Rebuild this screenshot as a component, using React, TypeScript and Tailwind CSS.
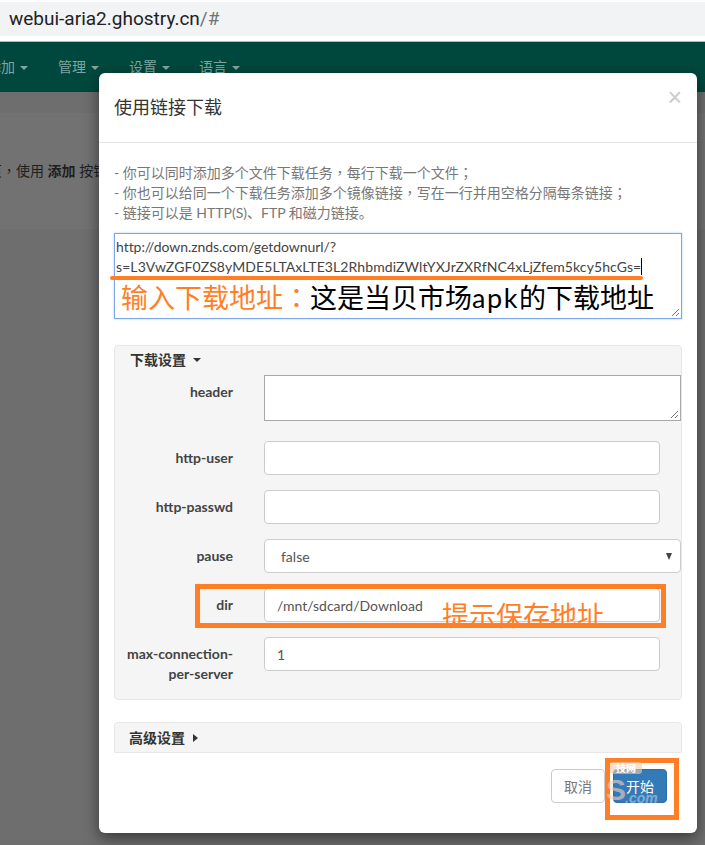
const cjk = "font-['Lato','Noto_Sans_CJK_SC',sans-serif]";

// centred full-width punctuation, like the YaHei glyphs in the picture
const P = ({ c }: { c: string }) => <span className="font-['Noto_Sans_CJK_TC',sans-serif] leading-[0px]">{c}</span>;

const Field = ({ label, value, wide, pad }: { label: string; value?: string; wide?: boolean; pad?: string }) => (
  <div className="flex items-start">
    <label className="w-[118px] shrink-0 pt-[7px] text-right text-[14px] leading-[20px] font-bold text-[#444]">{label}</label>
    <div className={`ml-[31px] flex h-[34px] items-center rounded-[4px] border border-[#ccc] bg-white text-[14px] text-[#555] ${pad ?? 'px-3'} ${wide ? 'w-[417px]' : 'w-[396px]'}`}>
      {value}
    </div>
  </div>
);

const Grip = () => (
  <svg className="absolute right-[1px] bottom-[1px]" width="9" height="9" viewBox="0 0 9 9">
    <path d="M1 8 8 1M5 8 8 5" stroke="#777" strokeWidth="1" fill="none" />
  </svg>
);

export default function App() {
  return (
    <div className={`relative h-[845px] w-[705px] overflow-hidden bg-[#6e6e6e] ${cjk}`}>
      <div className="h-[42px] border-b border-[#b8b8b8] bg-white pt-[2px]">
        <div className="flex h-[34px] items-center bg-[#f1f3f4] pl-[9px] font-['Roboto','Liberation_Sans',sans-serif] text-[19px] text-[#202124]">
          webui-aria2.ghostry.cn<span className="text-[#6f7478]">/#</span>
        </div>
      </div>

      <nav className="flex h-[50px] items-center bg-[#00483d] pb-[2px] text-[14px] text-[#7fa5a0]">
        <span className="ml-[-13px] w-[71px]">添加 <Caret /></span>
        <span className="w-[71px]">管理 <Caret /></span>
        <span className="w-[70px]">设置 <Caret /></span>
        <span>语言 <Caret /></span>
      </nav>

      <div className="mt-[21px] h-[116px] bg-[#727272] pt-[48px] text-[14px] leading-[20px] text-[#1f1f1f]">
        <p className="ml-[-12px] whitespace-nowrap">页<P c="，" />使用 <b>添加</b> 按钮</p>
      </div>

      <div className="absolute top-[73px] left-[99px] h-[760px] w-[598px] overflow-hidden rounded-[6px] bg-white shadow-[0_5px_15px_rgba(0,0,0,0.5)]">
        <header className="flex h-[70px] items-start justify-between border-b border-[#e5e5e5] pr-[15px] pl-[15px]">
          <h4 className="pt-[21px] text-[18px] leading-[26px] text-[#333]">使用链接下载</h4>
          <span className="pt-[11px] font-['Liberation_Sans',sans-serif] text-[25px] leading-[26px] text-[#ccc]">×</span>
        </header>

        <div className="px-[15px]">
          <div className="pt-[20px] text-[14px] leading-[20px] text-[#777]">
            <p>- 你可以同时添加多个文件下载任务<P c="，" />每行下载一个文件<P c="；" /></p>
            <p>- 你也可以给同一个下载任务添加多个镜像链接<P c="，" />写在一行并用空格分隔每条链接<P c="；" /></p>
            <p>- 链接可以是 HTTP(S)、FTP 和磁力链接。</p>
          </div>

          <div className="relative mt-[10px] h-[86px] w-[568px] border border-[#7da7e8] bg-white px-[1px] pt-[3px] text-[14px] leading-[20px] text-[#444] shadow-[0_0_2px_rgba(102,175,233,0.6)]">
            <div className="tracking-[-0.05px]">http://down.znds.com/getdownurl/?</div>
            <div className="whitespace-nowrap tracking-[0.09px]">s=L3VwZGF0ZS8yMDE5LTAxLTE3L2RhbmdiZWltYXJrZXRfNC4xLjZfem5kcy5hcGs=<span className="border-l border-black" /></div>
            <Grip />
          </div>

          <section className="mt-[26px] h-[355px] w-[568px] rounded-[4px] border border-[#e7e7e7] bg-[#f5f5f5]">
            <div className="flex h-[29px] items-center pb-[2px] pl-[15px] text-[14px] font-bold text-[#333]">
              下载设置
              <span className="ml-[7px] h-0 w-0 border-x-[4px] border-t-[4px] border-x-transparent border-t-[#333]" />
            </div>
            <div className="flex items-start">
              <label className="w-[118px] shrink-0 pt-[7px] text-right text-[14px] leading-[20px] font-bold text-[#444]">header</label>
              <div className="relative ml-[31px] h-[46px] w-[417px] border border-[#a9a9a9] bg-white">
                <Grip />
              </div>
            </div>
            <div className="mt-[20px] flex flex-col gap-[15px]">
              <Field label="http-user" />
              <Field label="http-passwd" />
              <div className="relative">
                <Field label="pause" value="false" wide pad="px-4" />
                <span className="absolute top-[14px] right-[9px] h-0 w-0 border-x-[3.5px] border-t-[7px] border-x-transparent border-t-[#444]" />
              </div>
              <Field label="dir" value="/mnt/sdcard/Download" />
              <div className="flex items-start">
                <label className="w-[118px] shrink-0 pt-[7px] text-right text-[14px] leading-[20px] font-bold text-[#444]">max-connection-per-server</label>
                <div className="ml-[31px] flex h-[34px] w-[396px] items-center rounded-[4px] border border-[#ccc] bg-white px-3 text-[14px] text-[#555]">1</div>
              </div>
            </div>
          </section>

          <section className="mt-[22px] flex h-[31px] w-[568px] items-center rounded-t-[4px] border border-[#e7e7e7] bg-[#f5f5f5] pl-[14px] text-[14px] font-bold text-[#333]">
            高级设置
            <span className="ml-[8px] h-0 w-0 border-y-[4px] border-l-[5px] border-y-transparent border-l-[#333]" />
          </section>
        </div>

        <footer className="flex justify-end gap-[8px] pt-[16px] pr-[30px]">
          <button className="h-[34px] w-[54px] rounded-[4px] border border-[#ccc] bg-white text-[14px] text-[#777]">取消</button>
          <button className="h-[34px] w-[54px] rounded-[4px] border border-[#2e6da4] bg-[#337ab7] text-[14px] text-white">开始</button>
        </footer>
      </div>

      {/* annotations painted on top of the screenshot */}
      <div className="absolute top-[276px] left-[110px] h-[4px] w-[533px] rounded-full bg-[#ff7f27]" />
      <div className="absolute top-[280px] left-[121px] whitespace-nowrap text-[27px] leading-[36px] text-[#ff7f27]">
        输入下载地址<P c="：" /><span className="text-black">这是当贝市场<span className="tracking-[1.6px]">apk</span>的下载地址</span>
      </div>
      <div className="absolute top-[584px] left-[195px] h-[44px] w-[471px] border-[5px] border-[#ff7f27]" />
      <div className="absolute top-[601px] left-[442px] whitespace-nowrap text-[27px] leading-[30px] text-[#ff7f27]">提示保存地址</div>
      <div className="absolute top-[758px] left-[605px] h-[62px] w-[74px] border-[5px] border-[#ff7f27]" />

      {/* site watermark */}
      <div className="absolute top-[762px] left-[610px] h-[12px] w-[32px] rounded-[3px] bg-[#f7c9a8]/60 text-center text-[10px] leading-[12px] font-bold text-white">技网</div>
      <div className="absolute top-[776px] left-[606px] font-['Liberation_Sans',sans-serif] text-[30px] leading-[28px] font-bold text-[#f3d3c0]/60">S</div>
      <div className="absolute top-[792px] left-[625px] font-['Liberation_Sans',sans-serif] text-[14px] leading-[12px] font-bold text-white/40 italic">.com</div>
    </div>
  );
}

function Caret() {
  return <span className="ml-[1px] inline-block h-0 w-0 border-x-[4px] border-t-[4px] border-x-transparent border-t-current align-middle" />;
}
